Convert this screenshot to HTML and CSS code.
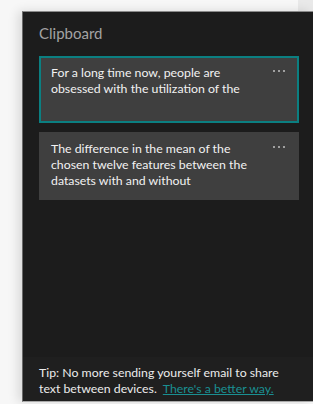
FILE: index.html
```html
<!DOCTYPE html>
<html>
<head>
<meta charset="utf-8">
<link rel="stylesheet" href="styles.css">
</head>
<body>
<div class="backwin"></div>
<div class="panel">
  <div class="title">Clipboard</div>
  <div class="list">
    <div class="card selected">
      <div class="text">For a long time now, people are obsessed with the utilization of the</div>
      <div class="more"><i></i><i></i><i></i></div>
    </div>
    <div class="card">
      <div class="text">The difference in the mean of the chosen twelve features between the datasets with and without</div>
      <div class="more"><i></i><i></i><i></i></div>
    </div>
  </div>
  <div class="footer">
    <div class="tip-line">Tip: No more sending yourself email to share</div>
    <div class="tip-line"><span>text between devices.</span><a class="link" href="#">There's a better way.</a></div>
  </div>
</div>
</body>
</html>
```
FILE: styles.css
```css
html, body {
  margin: 0;
  padding: 0;
}
body {
  width: 313px;
  height: 404px;
  background: #f7f7f7;
  position: relative;
  overflow: hidden;
  font-family: "Lato", "Noto Sans", sans-serif;
}
.backwin {
  position: absolute;
  left: 298px;
  top: 0;
  width: 15px;
  height: 12px;
  background: #e9e9e9;
}
.panel {
  position: relative;
  margin-left: 22px;
  margin-top: 11px;
  width: 291px;
  height: 391px;
  background: #1c1c1c;
  border-top: 1px solid #8a8a8a;
  border-left: 1px solid #6a6a6a;
  border-bottom: 1px solid #a9a9a9;
  box-sizing: border-box;
  box-shadow: -4px 0 10px rgba(0,0,0,0.12);
  display: flex;
  flex-direction: column;
}
.title {
  color: #a3a3a3;
  font-size: 15px;
  padding: 12px 0 0 16px;
  height: 33px;
  box-sizing: border-box;
  line-height: 18px;
}
.list {
  display: flex;
  flex-direction: column;
  gap: 9px;
  padding: 11px 14px 0 16px;
  flex: 1;
}
.card {
  background: #3f3f3f;
  position: relative;
  padding: 9px 30px 11px 12px;
  min-height: 67px;
  box-sizing: border-box;
  color: #f2f2f2;
  font-size: 12.3px;
  line-height: 16px;
}
.card.selected {
  border: 2px solid #0b7f81;
  padding: 7px 28px 9px 10px;
}
.more {
  position: absolute;
  right: 14px;
  top: 14px;
  display: flex;
  gap: 3px;
}
.more i {
  display: block;
  width: 2px;
  height: 2px;
  background: #a0a0a0;
}
.card.selected .more {
  right: 12px;
  top: 12px;
}
.footer {
  background: #1f1f1f;
  color: #ececec;
  font-size: 12.3px;
  line-height: 16px;
  padding: 8px 10px 4px 16px;
  height: 44px;
  box-sizing: border-box;
}
.tip-line {
  display: flex;
  gap: 6px;
  white-space: nowrap;
}
.link {
  color: #1a8f92;
  text-decoration: underline;
}
```
